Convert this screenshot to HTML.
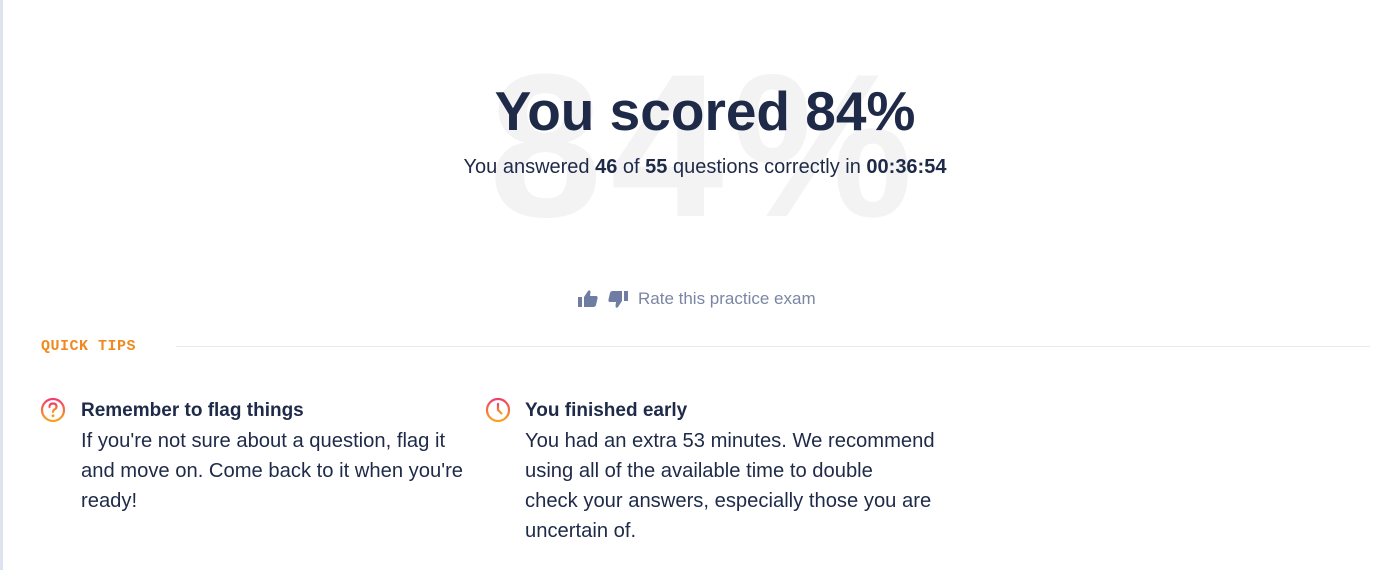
<!DOCTYPE html>
<html><head><style>
body{margin:0;width:1388px;height:570px;background:#fff;position:relative;overflow:hidden;font-family:"Liberation Sans",sans-serif;color:#1e2a48}
.lb{position:absolute;left:0;top:0;width:3px;height:570px;background:#dde4ef}
.wm{position:absolute;left:0;width:1410px;text-align:center;top:36px;font-size:204px;font-weight:bold;color:#f3f3f4;letter-spacing:8px;line-height:220px}
h1{position:absolute;left:0;width:1410px;text-align:center;top:79px;margin:0;font-size:55px;line-height:64px;font-weight:bold;color:#1e2a48}
.sub{position:absolute;left:0;width:1410px;text-align:center;top:156px;font-size:20px;color:#1e2a48}
.rate{position:absolute;left:577px;top:289px;font-size:17px;color:#7b86a4;display:flex;align-items:center}
.qt{position:absolute;left:41px;top:338px;font-family:"Liberation Mono",monospace;font-weight:bold;font-size:15px;color:#f0891e;letter-spacing:0.5px}
.hr{position:absolute;left:176px;right:18px;top:346px;height:1px;background:#e8eaee}
.tip{position:absolute;top:395px;font-size:20.2px;line-height:30px}
.tip b{font-weight:bold;font-size:19px}
.ic{position:absolute;top:397px}
</style></head><body>
<div class="lb"></div>
<div class="wm">84%</div>
<h1>You scored 84%</h1>
<div class="sub">You answered <b>46</b> of <b>55</b> questions correctly in <b>00:36:54</b></div>
<div class="rate">
<svg width="22" height="20" viewBox="0 0 22 20"><rect x="1" y="8" width="4" height="10" fill="#6f7da4"/><path d="M7 8 L11 2 Q13 0 13.5 3 L13 7 H19 Q21 7 20.5 9.5 L19 16 Q18.5 18 16 18 H7 Z" fill="#6f7da4"/></svg>
<svg style="margin-left:8px" width="22" height="20" viewBox="0 0 22 20"><g transform="translate(22 20) rotate(180)"><rect x="1" y="8" width="4" height="10" fill="#6f7da4"/><path d="M7 8 L11 2 Q13 0 13.5 3 L13 7 H19 Q21 7 20.5 9.5 L19 16 Q18.5 18 16 18 H7 Z" fill="#6f7da4"/></g></svg>
<span style="margin-left:9px">Rate this practice exam</span>
</div>
<div class="qt">QUICK TIPS</div>
<div class="hr"></div>
<svg class="ic" style="left:40px" width="26" height="26" viewBox="0 0 26 26"><defs><linearGradient id="g" x1="0" y1="0" x2="0" y2="1"><stop offset="0" stop-color="#ef3f6d"/><stop offset="1" stop-color="#f9a31b"/></linearGradient></defs><circle cx="13" cy="13" r="11" fill="none" stroke="url(#g)" stroke-width="2.2"/><path d="M9.5 10 Q9.5 6.5 13 6.5 Q16.5 6.5 16.5 9.7 Q16.5 11.5 14.5 12.5 Q13 13.3 13 15" fill="none" stroke="url(#g)" stroke-width="2.2" stroke-linecap="round"/><circle cx="13" cy="18.8" r="1.4" fill="#f7951f"/></svg>
<div class="tip" style="left:81px;width:400px"><b>Remember to flag things</b><br>If you're not sure about a question, flag it<br>and move on. Come back to it when you're<br>ready!</div>
<svg class="ic" style="left:485px" width="26" height="26" viewBox="0 0 26 26"><defs><linearGradient id="g2" x1="0" y1="0" x2="0" y2="1"><stop offset="0" stop-color="#ef3f6d"/><stop offset="1" stop-color="#f9a31b"/></linearGradient></defs><circle cx="13" cy="13" r="11" fill="none" stroke="url(#g2)" stroke-width="2.2"/><path d="M13 7 V13 L16.5 16.5" fill="none" stroke="url(#g2)" stroke-width="2.2" stroke-linecap="round"/></svg>
<div class="tip" style="left:525px;width:440px"><b>You finished early</b><br>You had an extra 53 minutes. We recommend<br>using all of the available time to double<br>check your answers, especially those you are<br>uncertain of.</div>
</body></html>
